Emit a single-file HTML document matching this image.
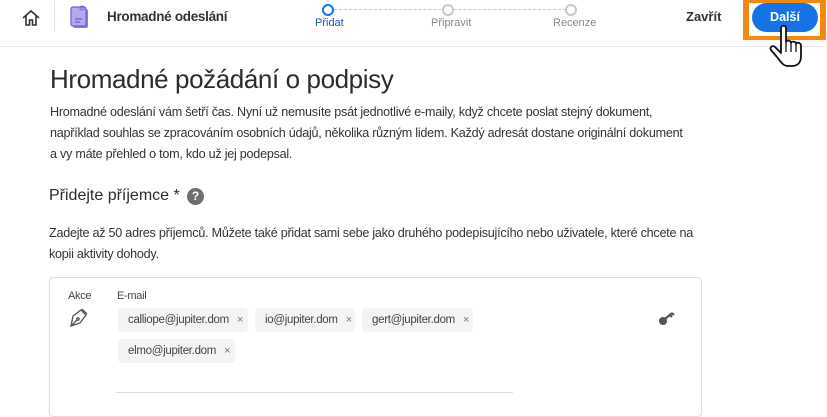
<!DOCTYPE html>
<html><head><meta charset="utf-8"><style>
*{margin:0;padding:0;box-sizing:border-box}
body{width:827px;height:409px;overflow:hidden;background:#fff;font-family:"Liberation Sans",sans-serif;color:#2c2c2c;position:relative}
.a{position:absolute;white-space:nowrap}
.p{font-size:12.6px;letter-spacing:-0.25px;line-height:21px;color:#333}
.chip{position:absolute;height:24px;background:#f4f4f4;border-radius:4px;font-size:11.5px;letter-spacing:-0.3px;color:#444;line-height:24px;padding-left:10px}
.chip span{color:#777;margin-left:8px;font-size:11px}
.dot{position:absolute;width:12px;height:12px;border:2px solid #c8c8c8;border-radius:50%;background:#fff;top:4px}
</style></head><body>
<div class="a" style="left:0;top:46px;width:827px;height:1px;background:#e6e6e6"></div>
<svg class="a" style="left:21px;top:8px" width="20" height="20" viewBox="0 0 20 20" fill="none" stroke="#333" stroke-width="1.6"><path d="M2 10 L10 3 L18 10 M5 8 V17 H8.5 V12 H11.5 V17 H15 V8"/></svg>
<div class="a" style="left:54px;top:2px;width:1px;height:30px;background:#e0e0e0"></div>
<svg class="a" style="left:70px;top:5px" width="20" height="24" viewBox="0 0 20 24"><rect x="3" y="4" width="15" height="19" rx="2" fill="#8a7fe0"/><rect x="1" y="2" width="15" height="19" rx="2" fill="#b3a9f3" stroke="#6d5fd6" stroke-width="1.2"/><path d="M5 14 h7 M5 17 h5" stroke="#6d5fd6" stroke-width="1.2"/><circle cx="12" cy="3" r="2" fill="none" stroke="#6d5fd6"/></svg>
<div class="a" style="left:107px;top:9px;font-size:13.5px;font-weight:bold;color:#333;letter-spacing:-0.3px">Hromadné odeslání</div>
<div class="a" style="left:334px;top:9px;width:237px;border-top:1px dashed #c8c8c8"></div>
<div class="dot" style="left:322px;border-color:#1473e6"></div>
<div class="dot" style="left:442px"></div>
<div class="dot" style="left:565px"></div>
<div class="a" style="left:315px;top:17px;font-size:11px;color:#1f55a8">Přidat</div>
<div class="a" style="left:431px;top:17px;font-size:11px;color:#888">Připravit</div>
<div class="a" style="left:553px;top:17px;font-size:11px;color:#888">Recenze</div>
<div class="a" style="left:686px;top:9px;font-size:13px;font-weight:bold;color:#333">Zavřít</div>
<div class="a" style="left:743px;top:0;width:83px;height:40px;background:#f5890f"></div>
<div class="a" style="left:749px;top:3px;width:71px;height:33px;background:#fff"></div>
<div class="a" style="left:752px;top:3px;width:66px;height:29px;background:#1473e6;border-radius:15px;color:#fff;font-size:12.5px;font-weight:bold;text-align:center;line-height:29px">Další</div>
<svg class="a" style="left:768px;top:24px" width="44" height="48" viewBox="0 0 44 48"><path d="M13 4 C13 1 18 1 18 4 V18 C18 16 23 16 23 19 C23 17 28 17 28 20 C28 18 33 18 33 22 V32 C33 38 30 42 24 42 H20 C15 42 13 38 9 33 L3 26 C1 23 5 21 7 23 L13 29 Z" fill="#fff" stroke="#111" stroke-width="1.8" stroke-linejoin="round"/><path d="M18 18 V28 M23 19 V28 M28 20 V28" stroke="#111" stroke-width="1.3"/></svg>
<div class="a" style="left:50px;top:64px;font-size:26px;color:#2c2c2c;letter-spacing:-0.4px">Hromadné požádání o podpisy</div>
<div class="a p" style="left:50px;top:102px">Hromadné odeslání vám šetří čas. Nyní už nemusíte psát jednotlivé e-maily, když chcete poslat stejný dokument,<br>například souhlas se zpracováním osobních údajů, několika různým lidem. Každý adresát dostane originální dokument<br>a vy máte přehled o tom, kdo už jej podepsal.</div>
<div class="a" style="left:49px;top:187px;font-size:16px;color:#2c2c2c">Přidejte příjemce *</div>
<div class="a" style="left:187px;top:188px;width:17px;height:17px;border-radius:50%;background:#6e6e6e;color:#fff;font-size:12px;font-weight:bold;text-align:center;line-height:17px">?</div>
<div class="a p" style="left:49px;top:223px">Zadejte až 50 adres příjemců. Můžete také přidat sami sebe jako druhého podepisujícího nebo uživatele, které chcete na<br>kopii aktivity dohody.</div>
<div class="a" style="left:49px;top:277px;width:653px;height:140px;border:1px solid #ddd;border-radius:4px"></div>
<div class="a" style="left:68px;top:290px;font-size:11px;letter-spacing:-0.3px;color:#444">Akce</div>
<div class="a" style="left:117px;top:290px;font-size:11px;letter-spacing:-0.3px;color:#444">E-mail</div>
<svg class="a" style="left:68px;top:306px" width="22" height="22" viewBox="0 0 22 22" fill="none" stroke="#555" stroke-width="1.3"><path d="M3 20 L5 10 L13 4 L18 9 L12 17 Z M3 20 L9 14 M14 3 L19 8"/><circle cx="10" cy="13" r="1.2"/></svg>
<div class="chip" style="left:118px;top:308px;width:130px">calliope@jupiter.dom<span>×</span></div>
<div class="chip" style="left:255px;top:308px;width:100px">io@jupiter.dom<span>×</span></div>
<div class="chip" style="left:362px;top:308px;width:111px">gert@jupiter.dom<span>×</span></div>
<div class="chip" style="left:118px;top:339px;width:117px">elmo@jupiter.dom<span>×</span></div>
<div class="a" style="left:116px;top:392px;width:397px;height:1px;background:#ddd"></div>
<svg class="a" style="left:658px;top:310px" width="18" height="16" viewBox="0 0 18 16"><circle cx="5" cy="11" r="4" fill="#555"/><path d="M7 9 L14 3 M12 5 L14 7 M14 3 L16 5" stroke="#555" stroke-width="2.2"/></svg>
</body></html>
